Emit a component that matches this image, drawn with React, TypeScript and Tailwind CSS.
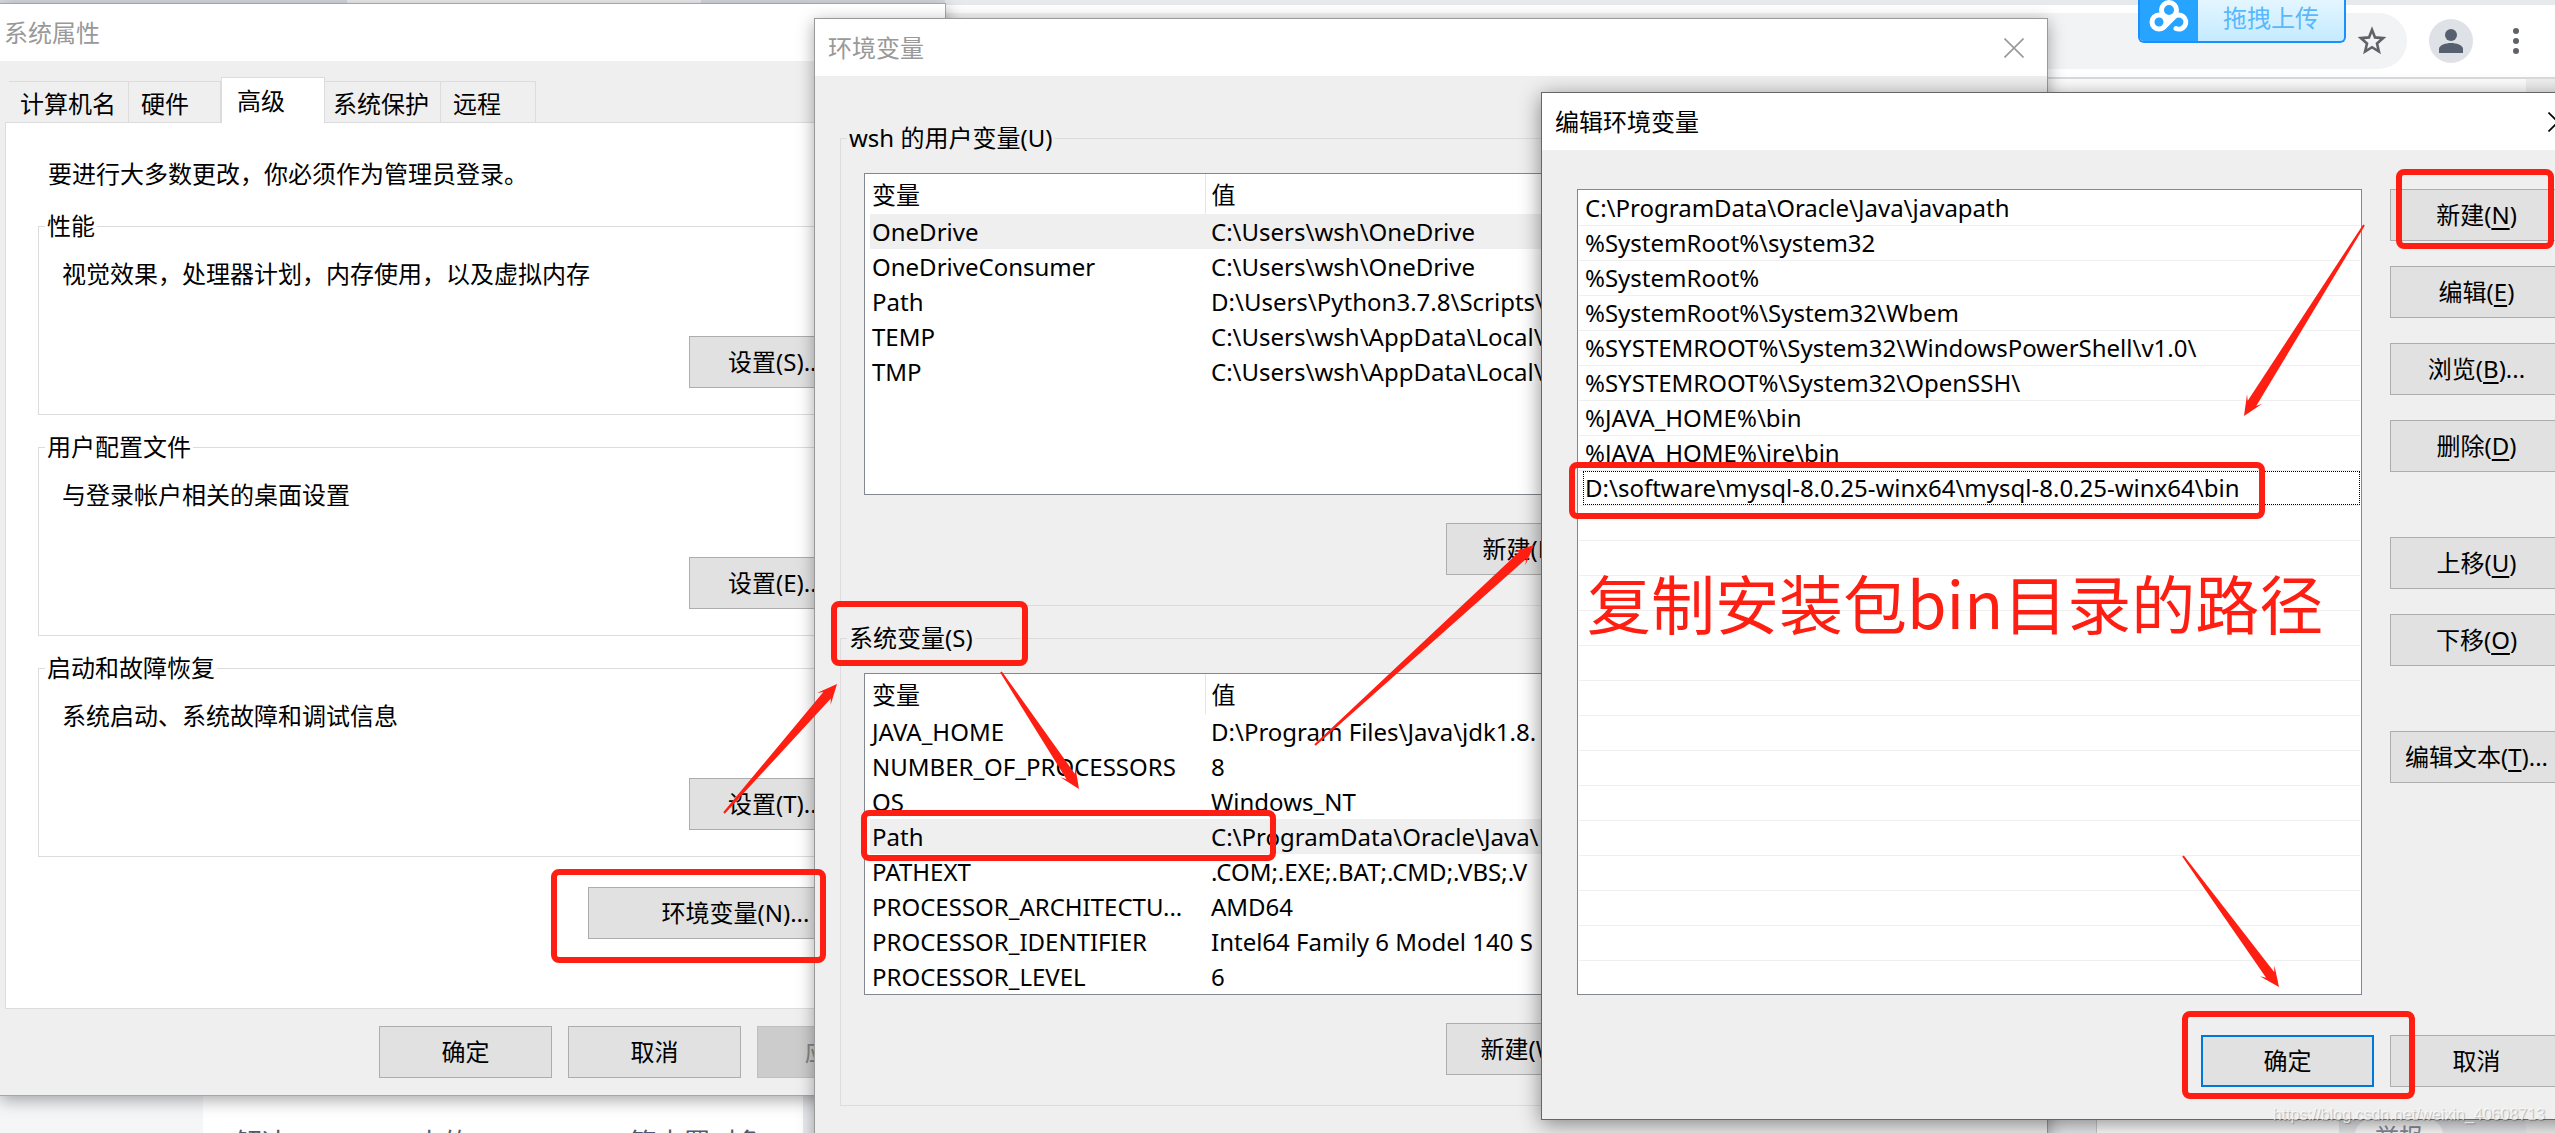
import type { ReactNode } from "react";

const userVars = [
  { name: "OneDrive", value: "C:\\Users\\wsh\\OneDrive" },
  { name: "OneDriveConsumer", value: "C:\\Users\\wsh\\OneDrive" },
  { name: "Path", value: "D:\\Users\\Python3.7.8\\Scripts\\" },
  { name: "TEMP", value: "C:\\Users\\wsh\\AppData\\Local\\" },
  { name: "TMP", value: "C:\\Users\\wsh\\AppData\\Local\\" },
];

const systemVars = [
  { name: "JAVA_HOME", value: "D:\\Program Files\\Java\\jdk1.8." },
  { name: "NUMBER_OF_PROCESSORS", value: "8" },
  { name: "OS", value: "Windows_NT" },
  { name: "Path", value: "C:\\ProgramData\\Oracle\\Java\\" },
  { name: "PATHEXT", value: ".COM;.EXE;.BAT;.CMD;.VBS;.V" },
  { name: "PROCESSOR_ARCHITECTU...", value: "AMD64" },
  { name: "PROCESSOR_IDENTIFIER", value: "Intel64 Family 6 Model 140 S" },
  { name: "PROCESSOR_LEVEL", value: "6" },
];

const paths = [
  "C:\\ProgramData\\Oracle\\Java\\javapath",
  "%SystemRoot%\\system32",
  "%SystemRoot%",
  "%SystemRoot%\\System32\\Wbem",
  "%SYSTEMROOT%\\System32\\WindowsPowerShell\\v1.0\\",
  "%SYSTEMROOT%\\System32\\OpenSSH\\",
  "%JAVA_HOME%\\bin",
  "%JAVA_HOME%\\jre\\bin",
  "D:\\software\\mysql-8.0.25-winx64\\mysql-8.0.25-winx64\\bin",
];

const groups = [
  { title: "性能", text: "视觉效果，处理器计划，内存使用，以及虚拟内存", button: "设置(S)..." },
  { title: "用户配置文件", text: "与登录帐户相关的桌面设置", button: "设置(E)..." },
  { title: "启动和故障恢复", text: "系统启动、系统故障和调试信息", button: "设置(T)..." },
];

const editActions = [
  { label: "新建", hotkey: "N", space: "" },
  { label: "编辑", hotkey: "E", space: "mt-[25px]" },
  { label: "浏览", hotkey: "B", tail: "...", space: "mt-[25px]" },
  { label: "删除", hotkey: "D", space: "mt-[25px]" },
  { label: "上移", hotkey: "U", space: "mt-[65px]" },
  { label: "下移", hotkey: "O", space: "mt-[25px]" },
  { label: "编辑文本", hotkey: "T", tail: "...", space: "mt-[65px]" },
];

// tail x, tail y, head x, head y
const arrows = [
  [724, 813, 837, 684],
  [1001, 672, 1079, 789],
  [1315, 745, 1534, 545],
  [2364, 225, 2244, 416],
  [2183, 856, 2279, 987],
];

const marks = [
  "left-[551px] top-[869px] w-[275px] h-[94px]",
  "left-[831px] top-[601px] w-[197px] h-[65px]",
  "left-[861px] top-[810px] w-[415px] h-[51px]",
  "left-[2396px] top-[169px] w-[158px] h-[80px]",
  "left-[1569px] top-[462px] w-[696px] h-[57px]",
  "left-[2182px] top-[1011px] w-[233px] h-[88px]",
];

function arrowPoints([x1, y1, x2, y2]: number[]) {
  const len = Math.hypot(x2 - x1, y2 - y1);
  const ux = (x2 - x1) / len;
  const uy = (y2 - y1) / len;
  const at = (back: number, side: number) =>
    `${x2 - ux * back - uy * side},${y2 - uy * back + ux * side}`;
  return [at(len, 1), at(15, 5), at(20, 9), at(0, 0), at(20, -9), at(15, -5), at(len, -1)].join(" ");
}

function Button({ children, className = "", ...rest }: { children: ReactNode; className?: string; disabled?: boolean }) {
  return (
    <button
      type="button"
      className={`h-[52px] shrink-0 border border-[#adadad] bg-[#e1e1e1] whitespace-nowrap disabled:border-[#bfbfbf] disabled:bg-[#cccccc] disabled:text-[#838383] ${className}`}
      {...rest}
    >
      {children}
    </button>
  );
}

function CloseButton() {
  return (
    <button type="button" aria-label="关闭">
      <svg width="20" height="20" viewBox="0 0 20 20" stroke="currentColor" strokeWidth="1.6">
        <path d="M0.5 0.5L19.5 19.5M19.5 0.5L0.5 19.5" />
      </svg>
    </button>
  );
}

function Browser() {
  return (
    <div className="flex h-full flex-col">
      <div className="flex h-[5px] shrink-0 bg-[#e6eaed]">
        <div className="w-[347px] bg-[#d9dce1]" />
        <div className="w-[354px] bg-[#f0f1f2]" />
        <div className="w-[244px] bg-[#d9dce1]" />
      </div>
      <div className="flex h-[74px] shrink-0 items-center border-b-2 border-[#dadce0] bg-white">
        <div className="flex h-14 flex-1 items-center justify-end rounded-r-full bg-[#f1f3f4] pr-5">
          <button type="button" aria-label="收藏">
            <svg width="30" height="30" viewBox="0 0 30 30" fill="none" stroke="#5f6368" strokeWidth="2.6">
              <path d="M15 3.8L18 11.4L26.2 12.1L20 17.5L21.9 25.5L15 21.2L8.1 25.5L10 17.5L3.8 12.1L12 11.4Z" />
            </svg>
          </button>
        </div>
        <button type="button" aria-label="用户" className="ml-[22px]">
          <svg width="44" height="44" viewBox="0 0 44 44">
            <circle cx="22" cy="22" r="22" fill="#dee1e6" />
            <circle cx="22" cy="16" r="6" fill="#56606f" />
            <path d="M10 34V30C10 26 17 24 22 24S34 26 34 30V34Z" fill="#56606f" />
          </svg>
        </button>
        <button type="button" aria-label="菜单" className="mr-9 ml-10">
          <svg width="6" height="28" viewBox="0 0 6 28" fill="#5f6368">
            <circle cx="3" cy="4" r="3" />
            <circle cx="3" cy="14" r="3" />
            <circle cx="3" cy="24" r="3" />
          </svg>
        </button>
      </div>
      <div className="flex flex-1">
        <div className="flex flex-1 flex-col justify-end bg-white">
          <div className="flex h-12">
            <div className="w-[203px] bg-[#f5f6f8]" />
            <div className="w-[600px] bg-white" />
            <div className="flex-1 bg-[#e9ebee]" />
            <div className="w-[243px] border-l border-[#cccccc] bg-white" />
            <div className="w-[187px] bg-[#e8eaed]" />
          </div>
        </div>
        <div className="w-[29px] bg-[#f1f1f1]" />
      </div>
      <div className="absolute top-[1127px] left-[235px] text-[27px] leading-8 whitespace-nowrap text-[#555666]">
        解决 postman 中的 component 等内置对象
      </div>
      <a href="#" className="absolute top-[1119px] left-[2355px] w-[88px] rounded-t-2xl bg-white text-center leading-9 text-[#8a8a9c]">
        举报
      </a>
    </div>
  );
}

function UploadBadge() {
  return (
    <button
      type="button"
      className="absolute top-0 left-[2138px] flex h-[43px] w-[208px] overflow-hidden rounded-b-md border-x-2 border-b-2 border-[#1890ff] bg-linear-to-b from-[#e4f6ff] to-[#c4ebff]"
    >
      <span className="h-full w-[58px] bg-[#26a4ff]">
        <svg width="58" height="41" viewBox="0 0 58 41" fill="none" stroke="#ffffff" strokeWidth="5">
          <circle cx="29" cy="10" r="7.5" />
          <circle cx="19" cy="22" r="7" />
          <path d="M24 27L34 17A7 7 0 1 1 36 28.500" strokeLinecap="round" />
        </svg>
      </span>
      <span className="flex-1 text-center leading-9 text-[#58b8fb]">拖拽上传</span>
    </button>
  );
}

function SystemProperties() {
  const tab = "flex h-[41px] items-center border border-b-0 border-l-0 border-[#dcdcdc] pt-1";
  return (
    <section className="absolute top-[3px] left-0 w-[946px] border border-l-0 border-[#a3a8a6] bg-[#efefef] shadow-[0_4px_16px_rgba(0,0,0,0.35)]">
      <h2 className="h-[57px] bg-white pl-1 leading-[57px] text-[#999999]">系统属性</h2>
      <div role="tablist" className="flex items-end pt-4 pl-[9px]">
        <button type="button" role="tab" className={`${tab} w-[120px] border-l pl-[11px]`}>计算机名</button>
        <button type="button" role="tab" className={`${tab} w-[92px] pl-3`}>硬件</button>
        <button type="button" role="tab" aria-selected="true" className="relative z-10 -mb-px flex h-[46px] w-[104px] items-center border border-b-0 border-[#dcdcdc] bg-white pl-[15px]">
          高级
        </button>
        <button type="button" role="tab" className={`${tab} w-[116px] pl-2`}>系统保护</button>
        <button type="button" role="tab" className={`${tab} w-[95px] pl-3`}>远程</button>
      </div>
      <div className="mr-[15px] ml-[5px] border border-[#dcdcdc] bg-white pt-[35px] pr-[46px] pb-[69px] pl-8">
        <p className="mb-5 ml-[10px]">要进行大多数更改，你必须作为管理员登录。</p>
        <div className="flex flex-col gap-4">
          {groups.map((group) => (
            <fieldset key={group.title} className="border border-[#dcdcdc] pr-5 pb-[26px] pl-[23px]">
              <legend className="-ml-[17px] px-[2px]">{group.title}</legend>
              <p className="pt-4">{group.text}</p>
              <div className="mt-[46px] flex justify-end">
                <Button className="w-[173px]">{group.button}</Button>
              </div>
            </fieldset>
          ))}
        </div>
        <div className="mt-[30px] flex justify-end">
          <Button className="w-[295px]">环境变量(N)...</Button>
        </div>
      </div>
      <div className="flex justify-end gap-4 py-[17px] pr-[15px]">
        <Button className="w-[173px]">确定</Button>
        <Button className="w-[173px]">取消</Button>
        <Button className="w-[173px]" disabled>应用(A)</Button>
      </div>
    </section>
  );
}

function VariableGroup({ title, rows, selected, button }: { title: string; rows: typeof userVars; selected: number; button: string }) {
  return (
    <fieldset className="border border-[#dcdcdc] px-[23px] pb-[30px]">
      <legend className="-ml-[17px] px-[2px]">{title}</legend>
      <div className="mt-[19px] h-[322px] overflow-hidden border border-[#828790] bg-white pl-[5px]">
        <table className="w-full table-fixed text-left whitespace-nowrap">
          <thead>
            <tr className="h-10">
              <th className="w-[335px] border-r border-[#e5e5e5] pt-[2px] pl-[2px] font-normal">变量</th>
              <th className="pt-[2px] pl-[6px] font-normal">值</th>
            </tr>
          </thead>
          <tbody>
            {rows.map((row, index) => (
              <tr key={row.name} className={index === selected ? "h-[35px] bg-[#efefef]" : "h-[35px]"}>
                <td className="pl-[2px]">{row.name}</td>
                <td className="pl-[6px]">{row.value}</td>
              </tr>
            ))}
          </tbody>
        </table>
      </div>
      <Button className="mt-7 ml-[582px] w-[173px]">{button}</Button>
    </fieldset>
  );
}

function EnvironmentVariables() {
  return (
    <section className="absolute top-[18px] left-[814px] w-[1234px] border border-[#999999] bg-[#efefef] pb-12 shadow-[0_4px_16px_rgba(0,0,0,0.35)]">
      <div className="flex h-[57px] items-center justify-between bg-white pr-[23px] pl-[13px] text-[#999999]">
        <h2>环境变量</h2>
        <CloseButton />
      </div>
      <div className="flex flex-col gap-4 pt-[46px] pr-6 pl-[25px]">
        <VariableGroup title="wsh 的用户变量(U)" rows={userVars} selected={0} button="新建(N)..." />
        <VariableGroup title="系统变量(S)" rows={systemVars} selected={3} button="新建(W)..." />
      </div>
    </section>
  );
}

function EditVariable() {
  return (
    <section className="absolute top-[92px] left-[1541px] w-[1048px] border border-[#666666] bg-[#efefef] shadow-[0_4px_20px_rgba(0,0,0,0.45)]">
      <div className="flex h-[57px] items-center justify-between bg-white pr-5 pl-[13px]">
        <h2>编辑环境变量</h2>
        <CloseButton />
      </div>
      <div className="flex gap-[28px] pt-[39px] pr-[25px] pl-[35px]">
        <ul className="h-[806px] flex-1 overflow-hidden border border-[#828790] bg-white px-[1px] pt-[1px] leading-[34px]">
          {Array.from({ length: 23 }, (_, index) => (
            <li key={index} className="h-[35px] border-b border-[#efefef] pl-1">
              {index === paths.length - 1 ? (
                <div className="h-[34px] border border-dotted border-black pl-[1px] leading-8">{paths[index]}</div>
              ) : (
                <div className="pl-[2px]">{paths[index]}</div>
              )}
            </li>
          ))}
        </ul>
        <div className="flex w-[173px] flex-col">
          {editActions.map((action) => (
            <Button key={action.hotkey} className={action.space}>
              {action.label}(<u className="underline-offset-4">{action.hotkey}</u>){action.tail}
            </Button>
          ))}
        </div>
      </div>
      <div className="mt-10 flex justify-end gap-4 pr-[25px] pb-8">
        <Button className="w-[173px] outline-2 -outline-offset-2 outline-[#0078d7]">确定</Button>
        <Button className="w-[173px]">取消</Button>
      </div>
    </section>
  );
}

function Annotations() {
  return (
    <div className="pointer-events-none absolute inset-0">
      {marks.map((mark) => (
        <div key={mark} className={`absolute rounded-lg border-6 border-[#ff1f12] ${mark}`} />
      ))}
      <svg className="absolute inset-0 size-full" fill="#ff1f12">
        {arrows.map((arrow) => (
          <polygon key={arrow.join()} points={arrowPoints(arrow)} />
        ))}
      </svg>
      <p className="absolute top-[561px] left-[1587px] font-['Noto_Sans_CJK_SC',sans-serif] text-[64px] leading-20 whitespace-nowrap text-[#ff1f12]">
        复制安装包bin目录的路径
      </p>
      <p className="absolute top-[1103px] right-[10px] font-['Liberation_Sans',sans-serif] text-[16px] leading-6 text-white/70 [text-shadow:1px_1px_1px_rgba(0,0,0,0.25)]">
        https://blog.csdn.net/weixin_40608713
      </p>
    </div>
  );
}

export default function App() {
  return (
    <main className="relative h-screen w-full overflow-hidden bg-white font-['Noto_Sans','Noto_Sans_CJK_SC',sans-serif] text-[24px] leading-8 text-black">
      <Browser />
      <UploadBadge />
      <SystemProperties />
      <EnvironmentVariables />
      <EditVariable />
      <Annotations />
    </main>
  );
}
